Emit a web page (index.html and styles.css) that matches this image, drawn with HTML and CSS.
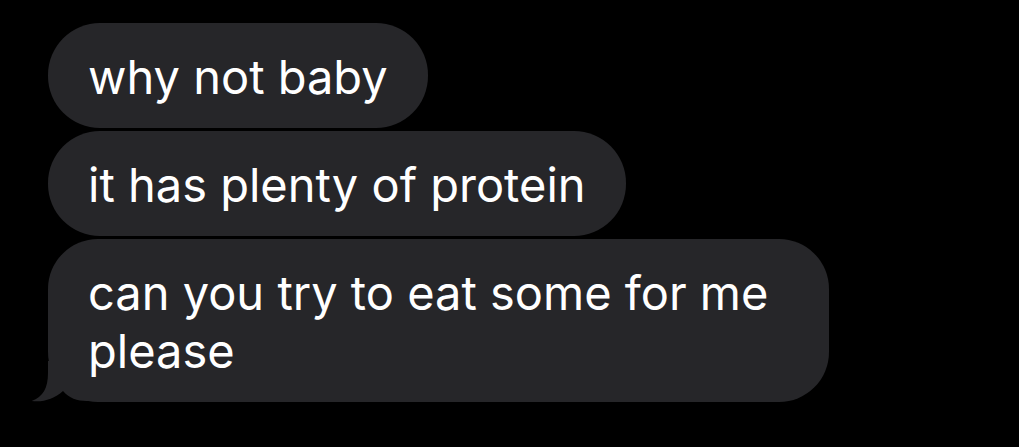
FILE: index.html
```html
<!DOCTYPE html>
<html lang="en">
<head>
<meta charset="utf-8">
<link rel="stylesheet" href="styles.css">
</head>
<body>
<div class="thread">
  <div class="bubble"><span class="text">why not baby</span></div>
  <div class="bubble"><span class="text">it has plenty of protein</span></div>
  <div class="bubble bubble-last">
    <svg class="tail" width="70" height="41" viewBox="0 0 70 41" aria-hidden="true">
      <path d="M17 0 L17 12 C17 27 12 36 0.7 40 C12 41.5 23 38 32 30 C38 37 46 40 56 40 L70 40 L70 0 Z" fill="#262629"/>
    </svg>
    <span class="text">can you try to eat some for me please</span>
  </div>
</div>
</body>
</html>
```

FILE: styles.css
```css
html, body {
  margin: 0;
  padding: 0;
  background: #000;
}
body {
  width: 1019px;
  height: 447px;
  overflow: hidden;
  font-family: Inter, "Noto Sans", "Liberation Sans", sans-serif;
}
.thread {
  display: flex;
  flex-direction: column;
  align-items: flex-start;
  gap: 3px;
  padding: 23px 0 0 48px;
}
.bubble {
  position: relative;
  background: #262629;
  color: #fff;
  font-size: 47px;
  line-height: 58px;
  padding: 25px 40px 22px;
  border-radius: 52px;
  max-width: 701px;
}
.bubble-last {
  border-radius: 50px;
}
.text {
  position: relative;
}
.tail {
  position: absolute;
  left: -17px;
  bottom: 0;
  display: block;
}
```
